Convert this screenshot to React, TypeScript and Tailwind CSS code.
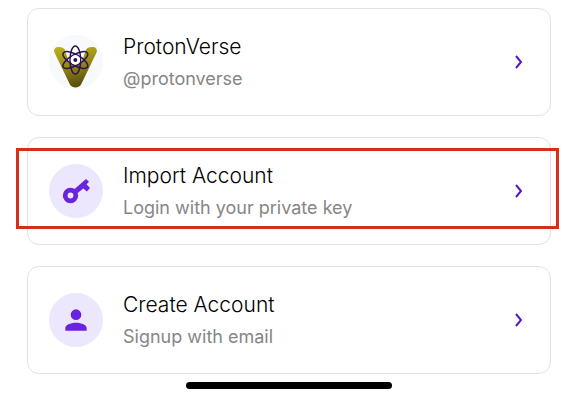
import type { ReactNode } from 'react';

function ProtonVerseLogo() {
  return (
    <svg viewBox="0 0 162 162" className="size-full" aria-hidden="true">
      <defs>
        <linearGradient id="gold" x1="0" y1="0" x2="0.25" y2="1">
          <stop offset="0" stopColor="#bdb51c" />
          <stop offset="0.5" stopColor="#968b18" />
          <stop offset="1" stopColor="#5c500f" />
        </linearGradient>
      </defs>
      <path
        d="M16 52 C13 42 19 36 30 36 C40 36 46 39 49 48 L60 84 L98 84 L109 48 C112 39 119 36 129 36 C140 36 146 42 143 52 L97 147 C92 161 67 161 62 147 Z"
        fill="url(#gold)"
      />
      <path d="M79 34 L89 50 L79 60 L69 50 Z" fill="#fff" />
      <g fill="none" stroke="#2c1350" strokeWidth="4.500">
        <ellipse cx="79" cy="75" rx="16" ry="42" />
        <ellipse cx="79" cy="75" rx="16" ry="42" transform="rotate(60 79 75)" />
        <ellipse cx="79" cy="75" rx="16" ry="42" transform="rotate(-60 79 75)" />
      </g>
      <circle cx="79" cy="75" r="14" fill="#fff" />
      <circle cx="79" cy="75" r="6" fill="#2c1350" />
    </svg>
  );
}

function KeyIcon() {
  return (
    <svg viewBox="0 0 54 54" className="size-full" aria-hidden="true">
      <circle cx="21.500" cy="31.500" r="5.300" fill="none" stroke="#6a24e0" strokeWidth="4.800" />
      <path
        d="M25 25.500 L37 15 L40 17.800 L37.500 20.300 L41 24 L37.800 27.500 L34.300 24.500 L28 29.500 Z"
        fill="#6a24e0"
      />
    </svg>
  );
}

function PersonIcon() {
  return (
    <svg viewBox="0 0 24 24" className="size-8" fill="#6a24e0" aria-hidden="true">
      <path d="M12 4a4 4 0 1 1 0 8a4 4 0 0 1 0-8M12 14c4.420 0 8 1.790 8 4v2H4v-2c0-2.210 3.580-4 8-4Z" />
    </svg>
  );
}

type Account = {
  title: string;
  detail: string;
  icon: ReactNode;
  tint: string;
  highlighted?: boolean;
};

const accounts: Account[] = [
  { title: 'ProtonVerse', detail: '@protonverse', icon: <ProtonVerseLogo />, tint: 'bg-[#f8f9fc]' },
  {
    title: 'Import Account',
    detail: 'Login with your private key',
    icon: <KeyIcon />,
    tint: 'bg-[#ece7fc]',
    highlighted: true,
  },
  { title: 'Create Account', detail: 'Signup with email', icon: <PersonIcon />, tint: 'bg-[#ece7fc]' },
];

function AccountCard({ title, detail, icon, tint, highlighted }: Account) {
  return (
    <li className="relative">
      <button
        type="button"
        className="flex w-full items-center gap-5 rounded-xl border border-[#e2e2e4] bg-white px-[21px] py-5 text-left"
      >
        <span className={`flex size-[54px] shrink-0 items-center justify-center overflow-hidden rounded-full ${tint}`}>
          {icon}
        </span>
        <span className="flex grow flex-col pt-0.5">
          <span className="text-[21px] leading-8 text-black">{title}</span>
          <span className="text-[18px] leading-8 font-normal text-[#868686]">{detail}</span>
        </span>
        <svg viewBox="0 0 20 16" className="h-4 w-5 shrink-0" aria-hidden="true">
          <path d="M7 2 L12 8 L7 14" fill="none" stroke="#5518c8" strokeWidth="2" />
        </svg>
      </button>
      {highlighted && (
        <span className="pointer-events-none absolute top-[11px] -right-2 bottom-4 -left-[11px] border-[3px] border-[#d3301c]" />
      )}
    </li>
  );
}

export default function App() {
  return (
    <main className="bg-white px-[27px] py-2 font-['Inter',sans-serif] font-light">
      <ul className="flex flex-col gap-[21px]">
        {accounts.map((account) => (
          <AccountCard key={account.title} {...account} />
        ))}
      </ul>
      <div className="mx-auto mt-2 h-[7px] w-[206px] rounded-full bg-black" />
    </main>
  );
}
